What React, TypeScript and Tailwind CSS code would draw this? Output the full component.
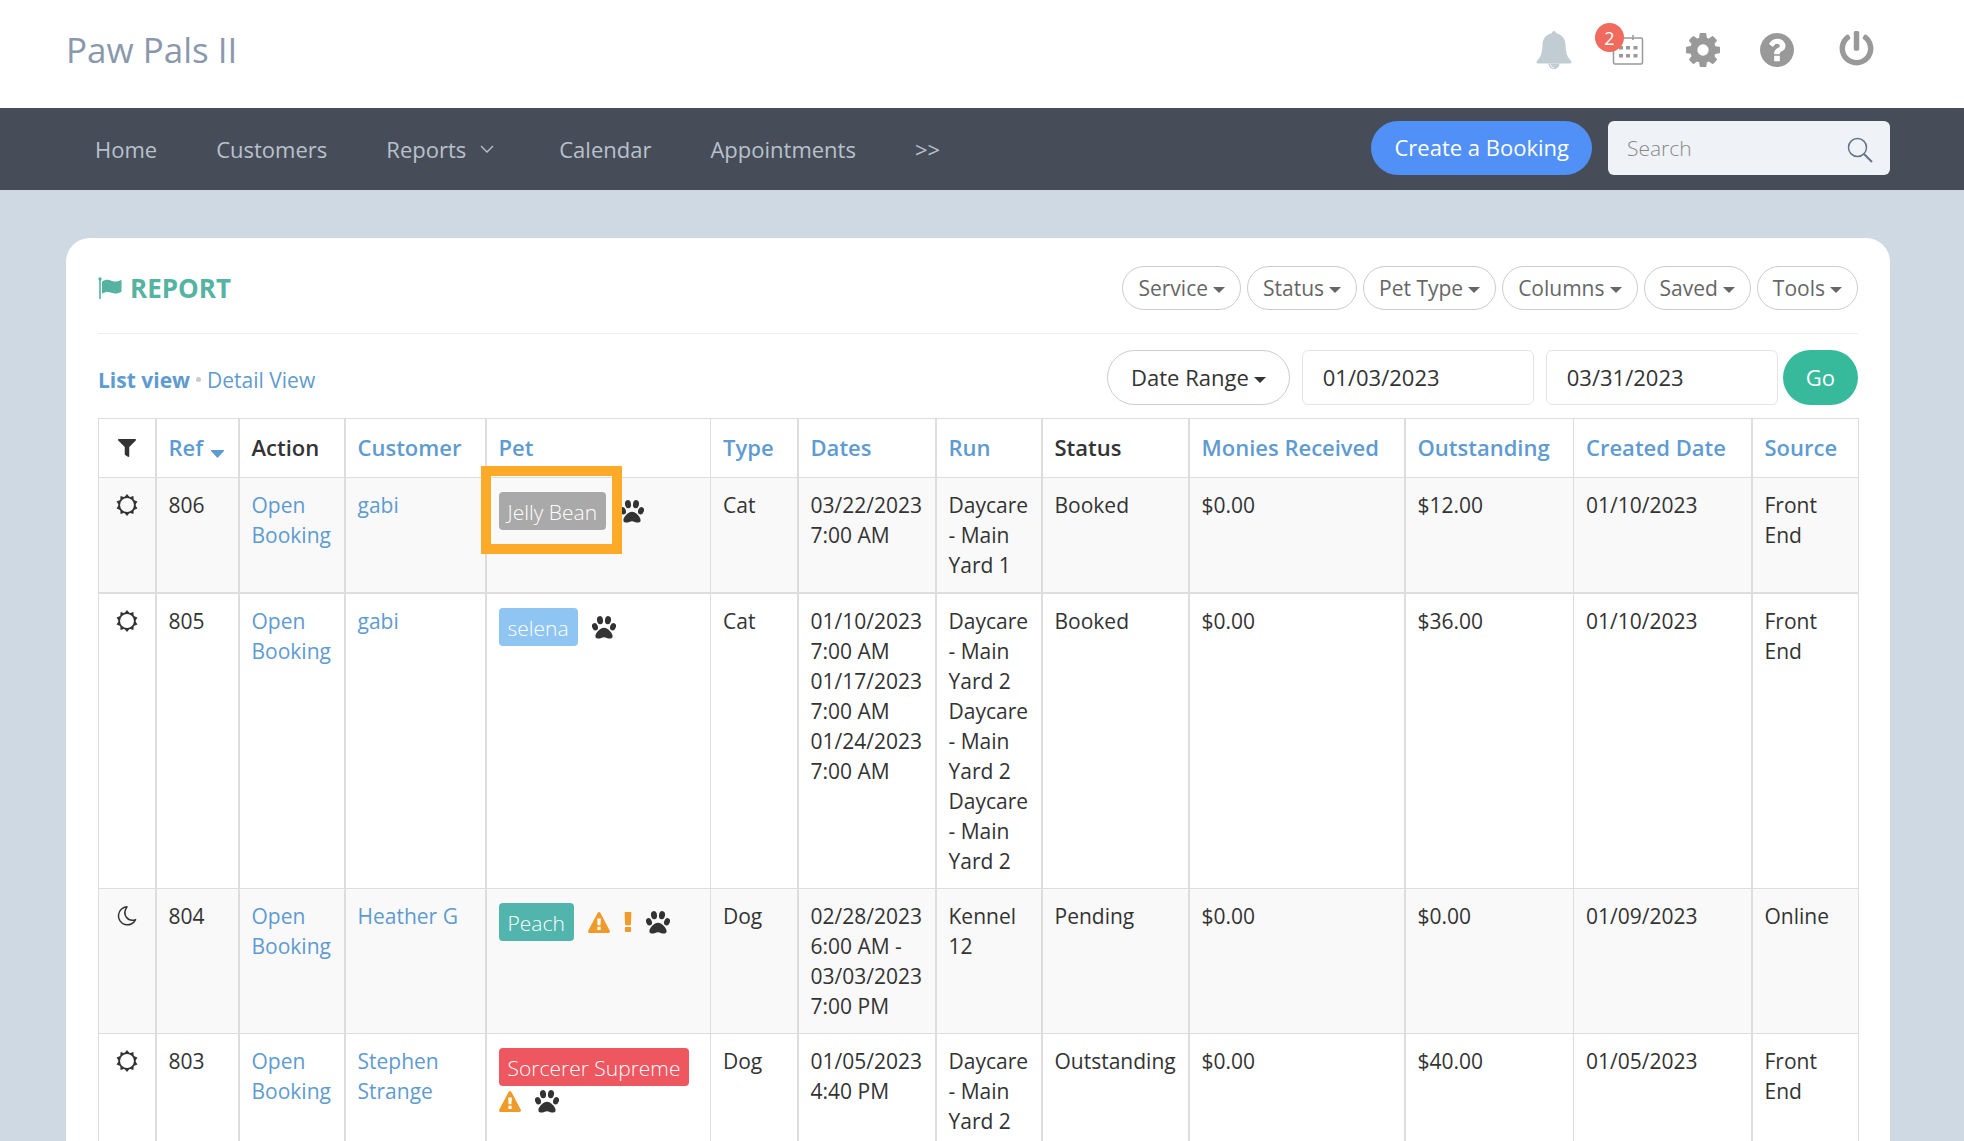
import React from "react";
import { FaFilter, FaPowerOff } from "react-icons/fa";

type Booking = {
  ref: string;
  overnight?: boolean;
  customer: string;
  pet: string;
  petColor: string;
  highlighted?: boolean;
  warning?: boolean;
  alert?: boolean;
  type: string;
  dates: string[];
  run: string[];
  status: string;
  received: string;
  outstanding: string;
  created: string;
  source: string;
};

const bookings: Booking[] = [
  {
    ref: "806",
    customer: "gabi",
    pet: "Jelly Bean",
    petColor: "bg-[#a9a9a9]",
    highlighted: true,
    type: "Cat",
    dates: ["03/22/2023", "7:00 AM"],
    run: ["Daycare - Main Yard 1"],
    status: "Booked",
    received: "$0.00",
    outstanding: "$12.00",
    created: "01/10/2023",
    source: "Front End",
  },
  {
    ref: "805",
    customer: "gabi",
    pet: "selena",
    petColor: "bg-[#8ec5f3]",
    type: "Cat",
    dates: [
      "01/10/2023",
      "7:00 AM",
      "01/17/2023",
      "7:00 AM",
      "01/24/2023",
      "7:00 AM",
    ],
    run: [
      "Daycare - Main Yard 2",
      "Daycare - Main Yard 2",
      "Daycare - Main Yard 2",
    ],
    status: "Booked",
    received: "$0.00",
    outstanding: "$36.00",
    created: "01/10/2023",
    source: "Front End",
  },
  {
    ref: "804",
    overnight: true,
    customer: "Heather G",
    pet: "Peach",
    petColor: "bg-[#52b5ad]",
    warning: true,
    alert: true,
    type: "Dog",
    dates: ["02/28/2023", "6:00 AM -", "03/03/2023", "7:00 PM"],
    run: ["Kennel 12"],
    status: "Pending",
    received: "$0.00",
    outstanding: "$0.00",
    created: "01/09/2023",
    source: "Online",
  },
  {
    ref: "803",
    customer: "Stephen Strange",
    pet: "Sorcerer Supreme",
    petColor: "bg-[#ee5660]",
    warning: true,
    type: "Dog",
    dates: ["01/05/2023", "4:40 PM"],
    run: ["Daycare - Main Yard 2"],
    status: "Outstanding",
    received: "$0.00",
    outstanding: "$40.00",
    created: "01/05/2023",
    source: "Front End",
  },
];

const columns = [
  { label: "Ref", width: "w-[83px]", sortable: true, sorted: true },
  { label: "Action", width: "w-[106px]" },
  { label: "Customer", width: "w-[141px]", sortable: true },
  { label: "Pet", width: "w-[225px]", sortable: true },
  { label: "Type", width: "w-[87px]", sortable: true },
  { label: "Dates", width: "w-[138px]", sortable: true },
  { label: "Run", width: "w-[106px]", sortable: true },
  { label: "Status", width: "w-[147px]" },
  { label: "Monies Received", width: "w-[216px]", sortable: true },
  { label: "Outstanding", width: "w-[169px]", sortable: true },
  { label: "Created Date", width: "w-[178px]", sortable: true },
  { label: "Source", width: "w-[107px]", sortable: true },
];

const filters = ["Service", "Status", "Pet Type", "Columns", "Saved", "Tools"];

const thinColumns = ["Pet", "Outstanding", "Source"];
const thinCell = "border border-[#dddddd] px-3 py-3 align-top";
const cell = "border border-r-2 border-[#dddddd] px-3 py-3 align-top";

const sunRays = [0, 36, 72, 108, 144, 180, 216, 252, 288, 324];

function Caret() {
  return (
    <svg viewBox="0 0 12 6" className="ml-[5px] inline-block h-[6px] w-3 align-middle">
      <path d="M0 0h12L6 6z" fill="currentColor" />
    </svg>
  );
}

function BellIcon() {
  return (
    <svg viewBox="0 0 36 40" className="h-10 w-9" fill="#c2cdd3">
      <path d="M18 1c1.400 0 2.200 1 2.200 2.300 5.600 1.200 9 5 9.300 11.200.3 8 1.500 12.500 5.700 16.500.8 1.200.3 2.500-1 2.500H1.800c-1.300 0-1.800-1.300-1-2.500 4.200-4 5.400-8.500 5.700-16.500C6.800 8.300 10.200 4.500 15.800 3.300 15.800 2 16.600 1 18 1z" />
      <path d="M12.500 33.500h11a5.500 5.800 0 0 1-11 0z" />
      <path d="M14.500 34.500c.5 2 1.500 3 3.300 3.300" fill="none" stroke="#fff" />
    </svg>
  );
}

function CalendarIcon() {
  return (
    <svg
      viewBox="0 0 32 32"
      className="size-8"
      fill="none"
      stroke="#999999"
      strokeWidth="1.500"
    >
      <rect x="1.500" y="4" width="29" height="26" rx="1.500" />
      <path d="M10 1v5M21 1v5" />
      <path
        d="M7 12h4v3.500h-4zM14 12h4v3.500h-4zM21.500 12h4v3.500h-4zM7 20h4v3.500h-4zM14 20h4v3.500h-4zM21.500 20h4v3.500h-4z"
        fill="#999999"
        stroke="none"
      />
    </svg>
  );
}

function GearIcon() {
  return (
    <svg viewBox="128 128 1536 1536" className="size-[34px]" fill="currentColor">
      <path d="M1152 896q0-106-75-181t-181-75-181 75-75 181 75 181 181 75 181-75 75-181zm512-109v222q0 12-8 23t-20 13l-185 28q-19 54-39 91 35 50 107 138 10 12 10 25t-9 23q-27 37-99 108t-94 71q-12 0-26-9l-138-108q-44 23-91 38-16 136-29 186-7 28-36 28h-222q-14 0-24.500-8.500t-11.500-21.500l-28-184q-49-16-90-37l-141 107q-10 9-25 9-14 0-25-11-126-114-165-168-7-10-7-23 0-12 8-23 15-21 51-66.500t54-70.500q-27-50-41-99l-183-27q-13-2-21-12.500t-8-23.500v-222q0-12 8-23t19-13l186-28q14-46 39-92-40-57-107-138-10-12-10-24 0-10 9-23 26-36 98.500-107.500t94.500-71.500q13 0 26 10l138 107q44-23 91-38 16-136 29-186 7-28 36-28h222q14 0 24.500 8.500t11.500 21.500l28 184q49 16 90 37l142-107q9-9 24-9 13 0 25 10 129 119 165 170 7 8 7 22 0 12-8 23-15 21-51 66.500t-54 70.500q26 50 41 98l183 28q13 2 21 12.500t8 23.500z" />
    </svg>
  );
}

function HelpIcon() {
  return (
    <svg viewBox="128 128 1536 1536" className="size-[34px]" fill="currentColor">
      <path d="M1024 1376v-192q0-14-9-23t-23-9h-192q-14 0-23 9t-9 23v192q0 14 9 23t23 9h192q14 0 23-9t9-23zm256-672q0-88-55.500-163t-138.500-116-170-41q-243 0-371 213-15 24 8 42l132 100q7 6 19 6 16 0 25-12 53-68 86-92 34-24 86-24 48 0 85.500 26t37.500 59q0 38-20 61t-68 45q-63 28-115.500 86.500t-52.500 125.500v36q0 14 9 23t23 9h192q14 0 23-9t9-23q0-19 21.500-49.500t54.500-49.500q32-18 49-28.500t46-35 44.500-48 28-60.500 12.500-81zm384 192q0 209-103 385.500t-279.500 279.500-385.500 103-385.500-103-279.500-279.500-103-385.500 103-385.500 279.500-279.500 385.500-103 385.500 103 279.500 279.500 103 385.500z" />
    </svg>
  );
}

function FlagIcon() {
  return (
    <svg viewBox="0 0 24 22" className="h-[22px] w-6" fill="#55b3a1">
      <circle cx="2" cy="2" r="1.700" />
      <path d="M1.200 2h1.600v20H1.200z" />
      <path d="M4 4.500c3-2 6-2.500 9.500-.8 3.500 1.500 6.500 1 10-.9v12c-3.500 2-6.500 2.300-10 1-3.500-1.500-6.500-1-9.500.8z" />
    </svg>
  );
}

function SunIcon() {
  return (
    <svg viewBox="0 0 22 22" className="inline-block size-[22px]" fill="#333333">
      <circle cx="11" cy="11" r="7.800" fill="none" stroke="#333333" strokeWidth="1.700" />
      {sunRays.map((angle) => (
        <path key={angle} d="M11 0l2.600 3.200H8.400z" transform={`rotate(${angle} 11 11)`} />
      ))}
    </svg>
  );
}

function MoonIcon() {
  return (
    <svg
      viewBox="0 0 22 22"
      className="inline-block size-[22px]"
      fill="none"
      stroke="#333333"
      strokeWidth="1.500"
      strokeLinejoin="round"
    >
      <path d="M11 1.800A9 9 0 1 0 19.600 14.600C12 17 5.500 10 11 1.800z" />
    </svg>
  );
}

function PawIcon() {
  return (
    <svg viewBox="0 0 24 23" className="h-[23px] w-6" fill="#333333">
      <ellipse cx="8" cy="4.200" rx="3" ry="4.100" transform="rotate(-8 8 4.200)" />
      <ellipse cx="16" cy="4.200" rx="3" ry="4.100" transform="rotate(8 16 4.200)" />
      <ellipse cx="3" cy="10.800" rx="2.800" ry="3.800" transform="rotate(-20 3 10.800)" />
      <ellipse cx="21" cy="10.800" rx="2.800" ry="3.800" transform="rotate(20 21 10.800)" />
      <path d="M12 11.800c3.600 0 8.600 5.200 8.600 8.400 0 1.800-1.300 2.400-2.900 2.400-2.200 0-3.600-1.400-5.700-1.400s-3.500 1.400-5.700 1.400c-1.600 0-2.900-.6-2.900-2.400 0-3.200 5-8.400 8.600-8.400z" />
    </svg>
  );
}

function WarningIcon() {
  return (
    <svg viewBox="0 0 22 21" className="h-[21px] w-[22px]" fill="#f09a29">
      <path d="M9.700.8c.6-1 2-1 2.600 0l9.400 17.800c.6 1.100-.1 2.400-1.300 2.400H1.600c-1.200 0-1.900-1.300-1.300-2.400z" />
      <path
        d="M9.100 6.500h3.800l-.5 6.800H9.600zM9.400 14.800h3.200V18H9.400z"
        className="fill-white"
      />
    </svg>
  );
}

function AlertIcon() {
  return (
    <svg viewBox="0 0 8 20" className="h-5 w-2" fill="#f09a29">
      <path d="M1.400 0h5.200c.5 0 .8.300.8.800l-.5 11.700c0 .5-.4.800-.8.800H1.900c-.4 0-.8-.3-.8-.8L.6.800C.6.300.9 0 1.400 0z" />
      <rect x=".9" y="15" width="6.200" height="5" rx="1" />
    </svg>
  );
}

function PetCell({ booking }: { booking: Booking }) {
  return (
    <div className="flex flex-wrap items-center gap-x-[14px] gap-y-1 pt-0.5">
      <span className="relative">
        <button
          className={`${booking.petColor} block h-[38px] rounded px-[9px] pt-px font-light text-white`}
        >
          {booking.pet}
        </button>
        {booking.highlighted && (
          <span className="absolute -top-[26px] -right-4 -bottom-6 -left-[18px] border-[10px] border-[#fcaa27]" />
        )}
      </span>
      {booking.warning && <WarningIcon />}
      {booking.alert && <AlertIcon />}
      <PawIcon />
    </div>
  );
}

function Header() {
  return (
    <header className="flex h-[108px] items-center justify-between bg-white pr-[90px] pb-2 pl-[66px]">
      <h1 className="text-[35px] text-[#8a98ae]">Paw Pals II</h1>
      <div className="flex items-center text-[#999999]">
        <button aria-label="Notifications" className="mr-10">
          <BellIcon />
        </button>
        <button aria-label="Pending bookings" className="relative mr-[42px]">
          <CalendarIcon />
          <span className="absolute -top-[11px] -left-[17px] flex size-[29px] items-center justify-center rounded-full bg-[#f06b5d] text-lg text-white">
            2
          </span>
        </button>
        <button aria-label="Settings" className="mr-10">
          <GearIcon />
        </button>
        <button aria-label="Help" className="mr-[45px]">
          <HelpIcon />
        </button>
        <button aria-label="Log out" className="pb-1">
          <FaPowerOff className="size-[35px]" />
        </button>
      </div>
    </header>
  );
}

function Navbar() {
  return (
    <nav className="flex h-[82px] items-center justify-between bg-[#464d58] pr-[74px] pl-[95px]">
      <div className="flex items-center gap-[59px] text-[22px] text-[#b9c1cd]">
        <a href="#home">Home</a>
        <a href="#customers">Customers</a>
        <a href="#reports" className="flex items-center gap-[14px] pr-[6px]">
          Reports
          <svg viewBox="0 0 14 8" className="h-2 w-[14px]" fill="none" stroke="currentColor" strokeWidth="1.400">
            <path d="M1 1l6 6 6-6" />
          </svg>
        </a>
        <a href="#calendar">Calendar</a>
        <a href="#appointments">Appointments</a>
        <a href="#more">&gt;&gt;</a>
      </div>
      <div className="flex items-center gap-4 pb-0.5">
        <button className="h-[54px] rounded-full bg-[#5190f6] px-[23px] pb-0.5 text-[22px] text-white">
          Create a Booking
        </button>
        <label className="flex h-[54px] w-[282px] items-center rounded-md bg-[#eff3f8] pr-[17px] pl-[19px]">
          <input
            type="text"
            placeholder="Search"
            aria-label="Search"
            className="w-full min-w-0 bg-transparent text-[21px] font-light outline-none placeholder:text-[#888888]"
          />
          <svg viewBox="0 0 26 26" className="mt-1 size-[26px] shrink-0" fill="none" stroke="#64748a" strokeWidth="1.500">
            <circle cx="10.500" cy="10.500" r="9" />
            <path d="M17 17l8 8" strokeWidth="2" />
          </svg>
        </label>
      </div>
    </nav>
  );
}

export default function App() {
  return (
    <div className="h-screen overflow-hidden bg-[#cfd9e3] font-['Open_Sans',sans-serif] text-[21px] leading-[30px] text-[#333333]">
      <Header />
      <Navbar />
      <main className="mt-12 mr-[74px] ml-[66px] rounded-t-[24px] bg-white px-8 pt-7">
        <div className="flex items-center justify-between border-b border-[#eeeeee] pb-[23px]">
          <h2 className="flex items-center gap-2 text-[26px] font-bold text-[#55b3a1]">
            <FlagIcon />
            REPORT
          </h2>
          <div className="flex gap-[6px]">
            {filters.map((filter) => (
              <button
                key={filter}
                className="h-[44px] rounded-full border border-[#cccccc] px-[15px] text-[#666666]"
              >
                {filter}
                <Caret />
              </button>
            ))}
          </div>
        </div>

        <div className="flex items-center justify-between pt-4">
          <div className="flex items-center gap-[6px] pt-1 text-[#5e9bd1]">
            <a href="#list" className="font-bold">
              List view
            </a>
            <span className="size-[5px] rounded-full bg-[#cccccc]" />
            <a href="#detail">Detail View</a>
          </div>
          <form
            className="flex items-center text-[22px]"
            onSubmit={(event) => event.preventDefault()}
          >
            <button
              type="button"
              className="mr-3 h-[55px] rounded-full border border-[#cccccc] px-[23px] pb-0.5"
            >
              Date Range
              <Caret />
            </button>
            <input
              type="text"
              aria-label="Start date"
              defaultValue="01/03/2023"
              className="mr-3 h-[55px] w-[232px] rounded-md border border-[#e5e5e5] px-5 pb-0.5"
            />
            <input
              type="text"
              aria-label="End date"
              defaultValue="03/31/2023"
              className="mr-[5px] h-[55px] w-[232px] rounded-md border border-[#e5e5e5] px-5 pb-0.5"
            />
            <button
              type="submit"
              className="h-[55px] rounded-full bg-[#36ba9b] px-[23px] pb-0.5 text-white"
            >
              Go
            </button>
          </form>
        </div>

        <table className="mt-[13px] w-full table-fixed border-collapse">
          <thead>
            <tr className="h-[59px]">
              <th className="w-[57px] border border-r-2 border-[#dddddd]">
                <FaFilter className="mx-auto size-[18px]" aria-label="Filter" />
              </th>
              {columns.map((column) => (
                <th
                  key={column.label}
                  className={`${column.width} ${
                    thinColumns.includes(column.label) ? "border" : "border border-r-2"
                  } border-[#dddddd] px-3 pb-0.5 text-left text-[22px] font-semibold whitespace-nowrap`}
                >
                  {column.sortable ? (
                    <a href="#sort" className="text-[#5e9bd1]">
                      {column.label}
                      {column.sorted && (
                        <svg viewBox="0 0 13 8" className="mt-2 ml-2 inline-block h-2 w-[13px]">
                          <path d="M0 0h13v1L6.500 8 0 1z" fill="currentColor" />
                        </svg>
                      )}
                    </a>
                  ) : (
                    column.label
                  )}
                </th>
              ))}
            </tr>
          </thead>
          <tbody>
            {bookings.map((booking) => (
              <tr
                key={booking.ref}
                className="border-[#dddddd] first:border-b-2 odd:bg-[#f9f9f9]"
              >
                <td className="border border-r-2 border-[#dddddd] pt-[10px] text-center align-top">
                  {booking.overnight ? <MoonIcon /> : <SunIcon />}
                </td>
                <td className={cell}>{booking.ref}</td>
                <td className={cell}>
                  <a href="#booking" className="text-[#5e9bd1]">
                    Open Booking
                  </a>
                </td>
                <td className={cell}>
                  <a href="#customer" className="text-[#5e9bd1]">
                    {booking.customer}
                  </a>
                </td>
                <td className={thinCell}>
                  <PetCell booking={booking} />
                </td>
                <td className={cell}>{booking.type}</td>
                <td className={cell}>
                  {booking.dates.map((line, index) => (
                    <div key={index} className="whitespace-nowrap">
                      {line}
                    </div>
                  ))}
                </td>
                <td className={cell}>
                  {booking.run.map((run, index) => (
                    <div key={index}>{run}</div>
                  ))}
                </td>
                <td className={cell}>{booking.status}</td>
                <td className={cell}>{booking.received}</td>
                <td className={thinCell}>{booking.outstanding}</td>
                <td className={cell}>{booking.created}</td>
                <td className={thinCell}>{booking.source}</td>
              </tr>
            ))}
          </tbody>
        </table>
      </main>
    </div>
  );
}
